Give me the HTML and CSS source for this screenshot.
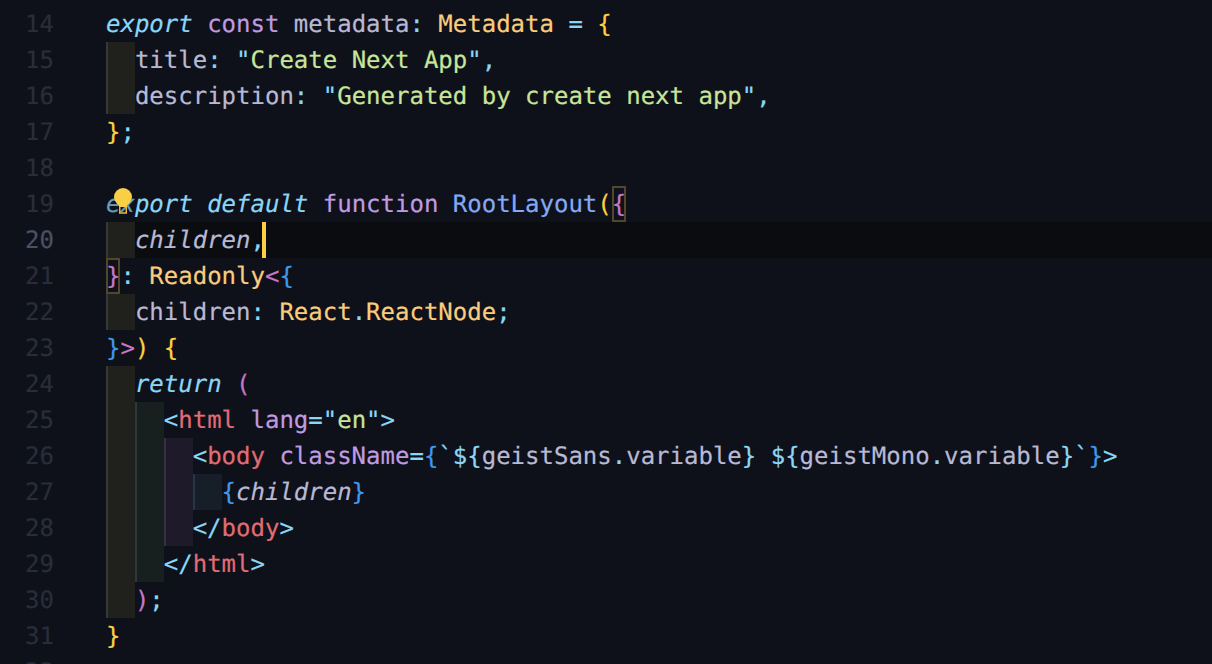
FILE: index.html
```html
<!DOCTYPE html>
<html lang="en">
<head>
<meta charset="utf-8">
<title>layout.tsx</title>
<link rel="stylesheet" href="styles.css">
</head>
<body>
<main class="editor">
<div class="line"><span class="ln">14</span><span class="code"><i class="sky">export</i> <span class="kw">const</span> metadata<span class="sky">:</span> <span class="type">Metadata</span> <span class="sky">=</span> <span class="yl">{</span></span></div>
<div class="line"><span class="ln">15</span><span class="g g1"></span><span class="code">title<span class="sky">:</span> <span class="sky">"</span><span class="str">Create Next App</span><span class="sky">",</span></span></div>
<div class="line"><span class="ln">16</span><span class="g g1"></span><span class="code">description<span class="sky">:</span> <span class="sky">"</span><span class="str">Generated by create next app</span><span class="sky">",</span></span></div>
<div class="line"><span class="ln">17</span><span class="code"><span class="yl">}</span><span class="sky">;</span></span></div>
<div class="line"><span class="ln">18</span><span class="code"></span></div>
<div class="line"><span class="ln">19</span><span class="code"><i class="dim">ex</i><i class="sky">port default</i> <span class="kw">function</span> <span class="fn">RootLayout</span><span class="yl">(</span><span class="match pk">{</span></span>
<svg class="bulb" viewBox="0 0 18 26" aria-hidden="true"><path class="bulb-base" d="M5.75 15h6.5v10h-6.5z"/><circle class="bulb-glow" cx="9" cy="9" r="9"/><path class="bulb-glow" d="M4 15h10l-1.5 4h-7z"/></svg></div>
<div class="line current"><span class="ln">20</span><span class="g g1"></span><span class="code hl"><i>children</i><span class="sky">,</span><span class="cursor"></span></span></div>
<div class="line"><span class="ln">21</span><span class="code"><span class="match pk">}</span><span class="sky">:</span> <span class="type">Readonly</span><span class="pk">&lt;</span><span class="bl">{</span></span></div>
<div class="line"><span class="ln">22</span><span class="g g1"></span><span class="code">children<span class="sky">:</span> <span class="type">React</span><span class="sky">.</span><span class="type">ReactNode</span><span class="sky">;</span></span></div>
<div class="line"><span class="ln">23</span><span class="code"><span class="bl">}</span><span class="pk">&gt;</span><span class="yl">)</span> <span class="yl">{</span></span></div>
<div class="line"><span class="ln">24</span><span class="g g1"></span><span class="code"><i class="sky">return</i> <span class="pk">(</span></span></div>
<div class="line"><span class="ln">25</span><span class="g g1"></span><span class="g g2"></span><span class="code"><span class="sky">&lt;</span><span class="tag">html</span> <span class="kw">lang</span><span class="sky">="</span><span class="str">en</span><span class="sky">"&gt;</span></span></div>
<div class="line"><span class="ln">26</span><span class="g g1"></span><span class="g g2"></span><span class="g g3"></span><span class="code"><span class="sky">&lt;</span><span class="tag">body</span> <span class="kw">className</span><span class="sky">=</span><span class="bl">{</span><span class="sky">`${</span>geistSans<span class="sky">.</span>variable<span class="sky">}</span> <span class="sky">${</span>geistMono<span class="sky">.</span>variable<span class="sky">}`</span><span class="bl">}</span><span class="sky">&gt;</span></span></div>
<div class="line"><span class="ln">27</span><span class="g g1"></span><span class="g g2"></span><span class="g g3"></span><span class="g g4"></span><span class="code"><span class="bl">{</span><i>children</i><span class="bl">}</span></span></div>
<div class="line"><span class="ln">28</span><span class="g g1"></span><span class="g g2"></span><span class="g g3"></span><span class="code"><span class="sky">&lt;/</span><span class="tag">body</span><span class="sky">&gt;</span></span></div>
<div class="line"><span class="ln">29</span><span class="g g1"></span><span class="g g2"></span><span class="code"><span class="sky">&lt;/</span><span class="tag">html</span><span class="sky">&gt;</span></span></div>
<div class="line"><span class="ln">30</span><span class="g g1"></span><span class="code"><span class="pk">)</span><span class="sky">;</span></span></div>
<div class="line"><span class="ln">31</span><span class="code"><span class="yl">}</span></span></div>
<div class="line"><span class="ln">32</span><span class="code"></span></div>
</main>
</body>
</html>
```
FILE: styles.css
```css
* { box-sizing: border-box; }
html, body { margin: 0; height: 100%; overflow: hidden; background: #0e1119; }
.editor {
  padding-top: 6px;
  height: 664px;
  overflow: hidden;
  font: 24px/36px "DejaVu Sans Mono", monospace;
  color: #b8b9d5;
  text-rendering: geometricPrecision;
  -webkit-text-stroke: 0.2px;
}
.line { display: flex; position: relative; height: 36px; }
.ln { flex: none; width: 54px; margin-right: 52px; text-align: right; color: #292d39; }
.current .ln { color: #4b5064; }
.code { flex: 1; white-space: pre; min-width: 0; }
.hl { background: #0b0c10; }
.g { flex: none; width: 28.9px; border-left: 2px solid; }
.g1 { background: #20211c; border-color: #35373a; }
.g2 { background: #18201f; border-color: #2a3a3c; }
.g3 { background: #1e1a29; border-color: #372f46; }
.g4 { background: #161e27; border-color: #253646; }
i { font-style: italic; }
.sky { color: #89d6f7; }
.dim { color: #6a9db5; }
.kw { color: #c09be0; }
.type { color: #f9cd7e; }
.fn { color: #84a9f5; }
.yl { color: #fcd03f; }
.pk { color: #c678c8; }
.bl { color: #3f98ee; }
.str { color: #c9e59b; }
.tag { color: #e06c75; }
.match { display: inline-block; height: 36px; box-shadow: inset 0 0 0 2px #53472b; vertical-align: top; }
.cursor {
  display: inline-block;
  width: 4px;
  height: 36px;
  margin-left: -3px;
  background: #fbcf45;
  vertical-align: top;
}
.bulb { position: absolute; left: 114px; top: 2px; width: 18px; height: 26px; }
.bulb-glow { fill: #f8cf45; }
.bulb-base { fill: none; stroke: #e8b93a; stroke-width: 1.5; }
```
